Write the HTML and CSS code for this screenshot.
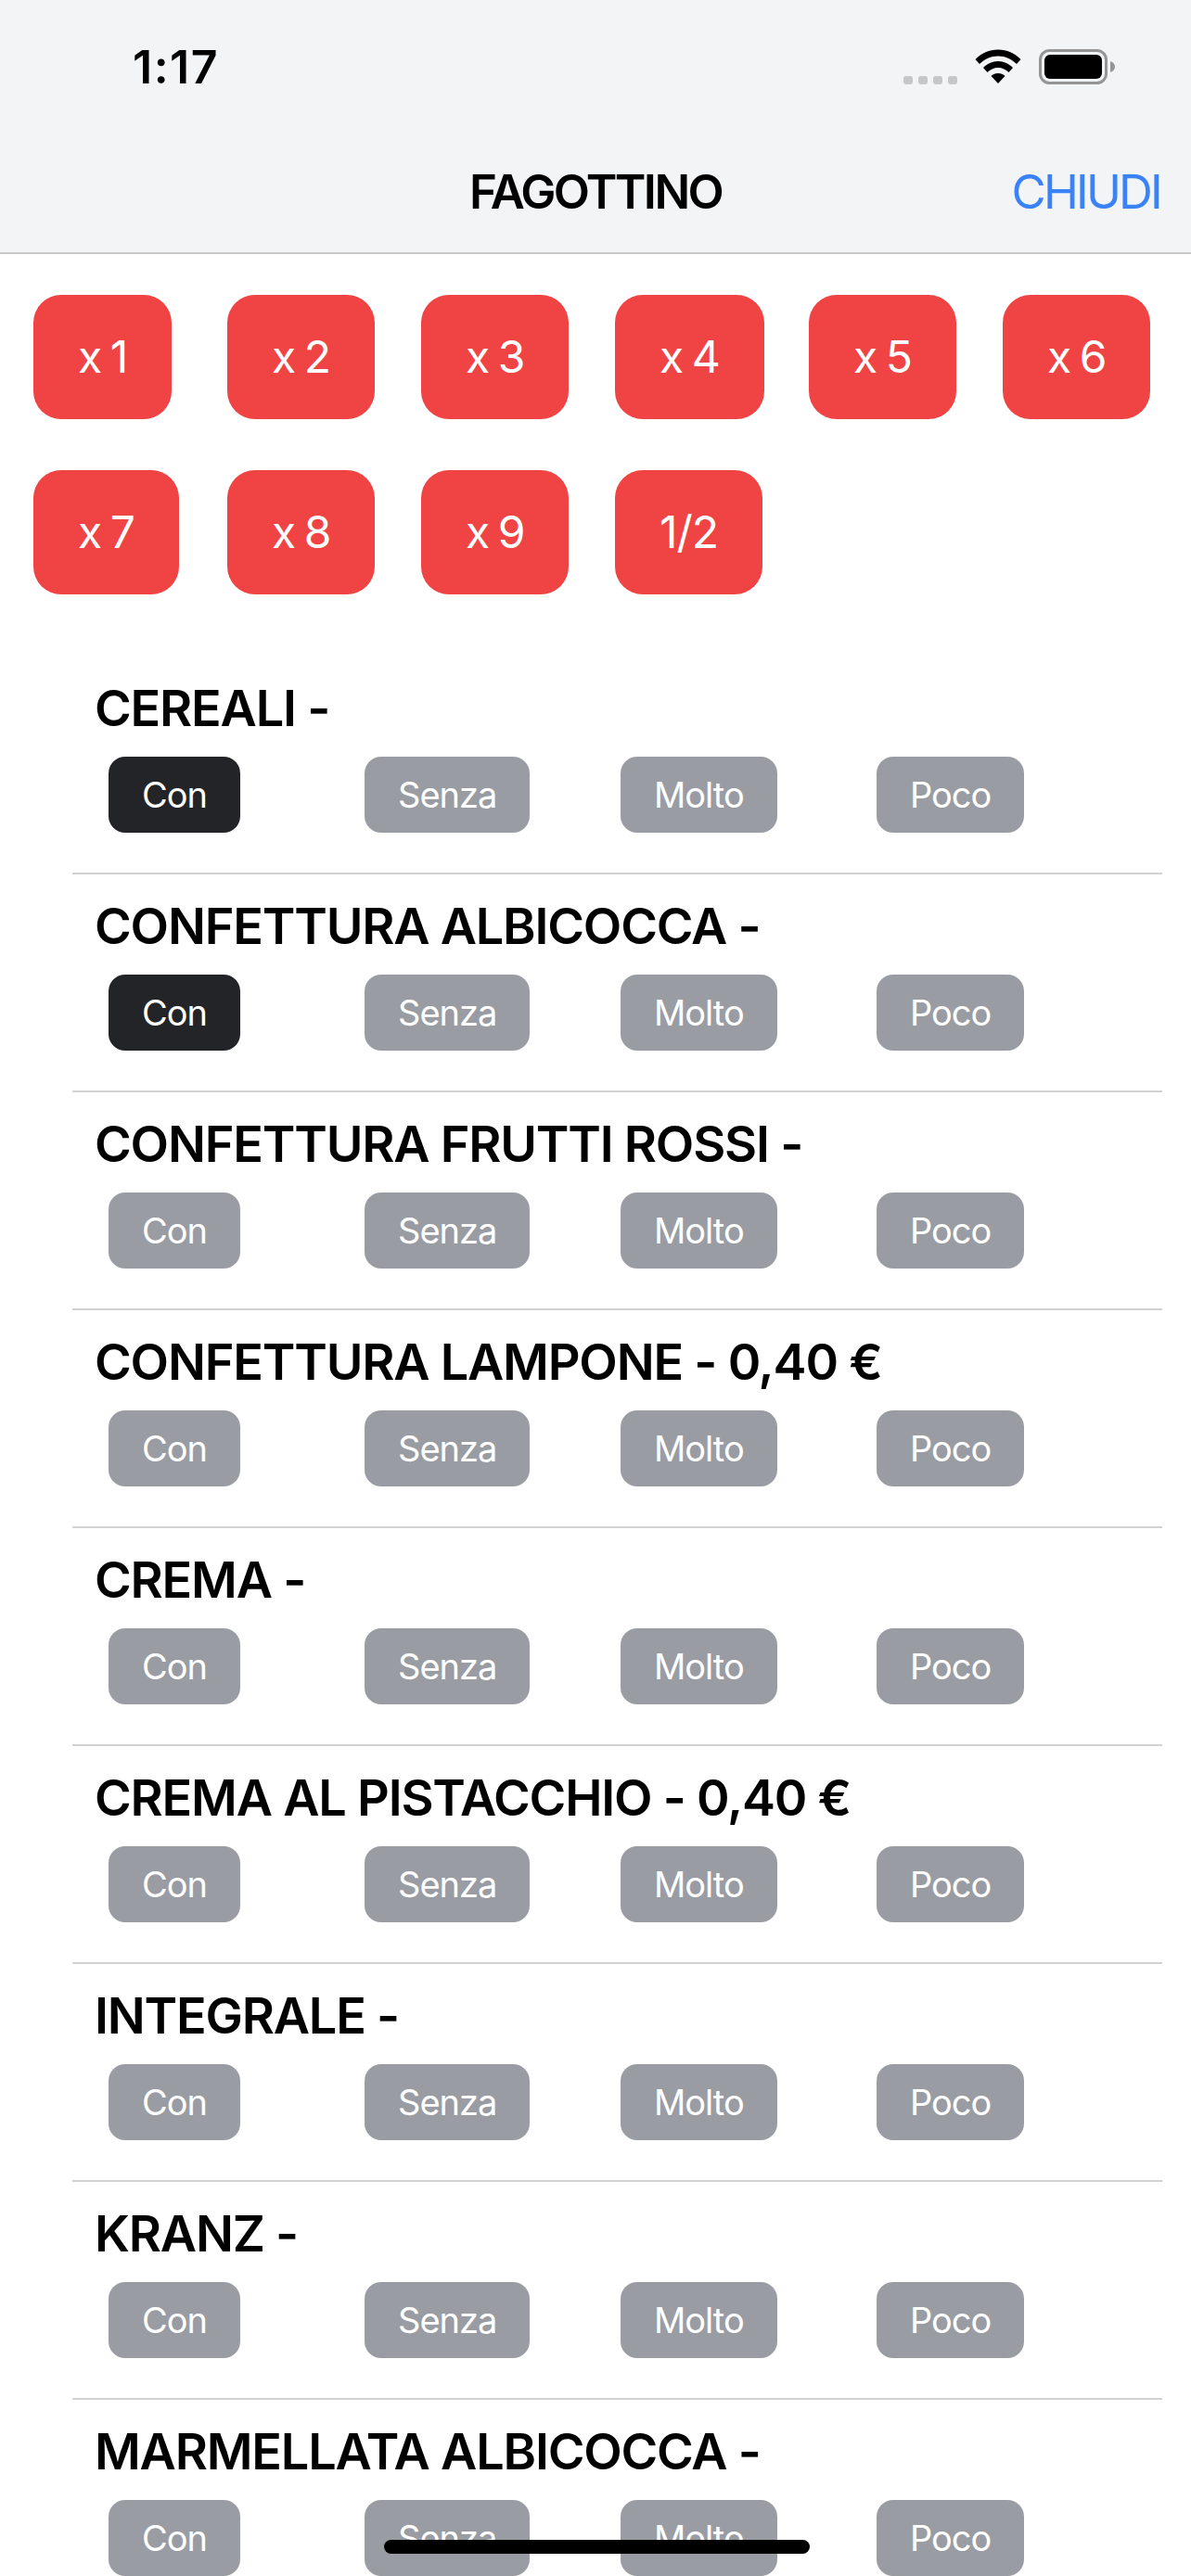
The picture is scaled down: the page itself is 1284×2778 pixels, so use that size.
FILE: index.html
```html
<!DOCTYPE html>
<html lang="en">
<head>
    <meta charset="UTF-8">
    <title>Fagottino</title>
    <link rel="stylesheet" href="styles.css">
</head>
<body>

    <!-- Header -->
    <div class="header">
        <div class="status-bar">
            <span class="clock">1:17</span>
            <div class="status-icons">
                <div class="signal"><span></span><span></span><span></span><span></span></div>
                <svg class="wifi" viewBox="0 0 50 37">
                    <path d="M0.5 11C7 4.5 15.6 0.5 25 0.5C34.4 0.5 43 4.5 49.5 11L45 16C39.7 10.8 32.7 7.5 25 7.5C17.3 7.5 10.3 10.8 5 16Z"/>
                    <path d="M9 20C13 16 18.8 13 25 13C31.2 13 37 16 41 20L36.5 25C33.5 22 29.5 20 25 20C20.5 20 16.5 22 13.5 25Z"/>
                    <path d="M17.5 29C19.5 27 22 26 25 26C28 26 30.5 27 32.5 29L25 37Z"/>
                </svg>
                <svg class="battery" viewBox="0 0 82 38">
                    <rect x="1.5" y="1.5" width="71" height="35" rx="10" fill="none" stroke="#959595" stroke-width="3"/>
                    <rect x="6" y="6" width="62" height="26" rx="6" fill="#000"/>
                    <path d="M77 13C80 14 82 16 82 19C82 22 80 24 77 25Z" fill="#959595"/>
                </svg>
            </div>
        </div>
        <div class="navbar">
            <span class="nav-title">FAGOTTINO</span>
            <a class="nav-close" href="#">CHIUDI</a>
        </div>
    </div>

    <!-- Quantity buttons -->
    <div class="qty-grid">
        <div class="qty-btn">x 1</div>
        <div class="qty-btn">x 2</div>
        <div class="qty-btn">x 3</div>
        <div class="qty-btn">x 4</div>
        <div class="qty-btn">x 5</div>
        <div class="qty-btn">x 6</div>
        <div class="qty-btn">x 7</div>
        <div class="qty-btn">x 8</div>
        <div class="qty-btn">x 9</div>
        <div class="qty-btn">1/2</div>
    </div>

    <!-- Ingredients -->
    <div class="list">
        <div class="row">
            <div class="row-title">CEREALI -</div>
            <div class="options">
                <div class="opt active">Con</div><div class="opt">Senza</div><div class="opt">Molto</div><div class="opt">Poco</div>
            </div>
        </div>
        <div class="row">
            <div class="row-title">CONFETTURA ALBICOCCA -</div>
            <div class="options">
                <div class="opt active">Con</div><div class="opt">Senza</div><div class="opt">Molto</div><div class="opt">Poco</div>
            </div>
        </div>
        <div class="row">
            <div class="row-title">CONFETTURA FRUTTI ROSSI -</div>
            <div class="options">
                <div class="opt">Con</div><div class="opt">Senza</div><div class="opt">Molto</div><div class="opt">Poco</div>
            </div>
        </div>
        <div class="row">
            <div class="row-title">CONFETTURA LAMPONE - 0,40 €</div>
            <div class="options">
                <div class="opt">Con</div><div class="opt">Senza</div><div class="opt">Molto</div><div class="opt">Poco</div>
            </div>
        </div>
        <div class="row">
            <div class="row-title">CREMA -</div>
            <div class="options">
                <div class="opt">Con</div><div class="opt">Senza</div><div class="opt">Molto</div><div class="opt">Poco</div>
            </div>
        </div>
        <div class="row">
            <div class="row-title">CREMA AL PISTACCHIO - 0,40 €</div>
            <div class="options">
                <div class="opt">Con</div><div class="opt">Senza</div><div class="opt">Molto</div><div class="opt">Poco</div>
            </div>
        </div>
        <div class="row">
            <div class="row-title">INTEGRALE -</div>
            <div class="options">
                <div class="opt">Con</div><div class="opt">Senza</div><div class="opt">Molto</div><div class="opt">Poco</div>
            </div>
        </div>
        <div class="row">
            <div class="row-title">KRANZ -</div>
            <div class="options">
                <div class="opt">Con</div><div class="opt">Senza</div><div class="opt">Molto</div><div class="opt">Poco</div>
            </div>
        </div>
        <div class="row">
            <div class="row-title">MARMELLATA ALBICOCCA -</div>
            <div class="options">
                <div class="opt">Con</div><div class="opt">Senza</div><div class="opt">Molto</div><div class="opt">Poco</div>
            </div>
        </div>
    </div>

    <div class="home-indicator"></div>

</body>
</html>
```

FILE: styles.css
```css
html, body {
    margin: 0;
    padding: 0;
    height: 2778px;
    overflow: hidden;
}

body {
    font-family: Inter, "Liberation Sans", sans-serif;
    background-color: #fff;
    color: #000;
}

/* Header */
.header {
    height: 274px;
    box-sizing: border-box;
    background: #f3f4f6;
    border-bottom: 2px solid #c8c8cb;
}

.status-bar {
    display: flex;
    justify-content: space-between;
    align-items: flex-start;
    height: 160px;
    box-sizing: border-box;
    padding: 53px 82px 0 143px;
}

.clock {
    font-size: 50px;
    line-height: 38px;
    font-weight: 600;
    letter-spacing: 1.5px;
}

.status-icons {
    display: flex;
    align-items: flex-start;
}

.signal {
    display: flex;
    gap: 6px;
    margin-top: 29px;
    margin-right: 19px;
}

.signal span {
    width: 10px;
    height: 9px;
    border-radius: 3px;
    background: #c6c6c8;
}

.wifi {
    width: 50px;
    height: 37px;
    margin-right: 19px;
}

.battery {
    width: 82px;
    height: 38px;
}

.navbar {
    display: flex;
    justify-content: center;
    position: relative;
    line-height: 48px;
    margin-top: 23px;
}

.nav-title {
    font-size: 51px;
    font-weight: 600;
    letter-spacing: -2.6px;
}

.nav-close {
    position: absolute;
    right: 33px;
    top: 0;
    font-size: 51px;
    color: #3b82f6;
    text-decoration: none;
    letter-spacing: -2.8px;
}

/* Quantity buttons */
.qty-grid {
    display: grid;
    grid-template-columns: repeat(6, 209px);
    row-gap: 55px;
    justify-items: start;
    padding: 44px 0 0 36px;
}

.qty-btn {
    height: 134px;
    line-height: 134px;
    padding: 0 48px;
    background: #f04343;
    color: #fff;
    font-size: 48px;
    letter-spacing: -1px;
    word-spacing: -3px;
    border-radius: 30px;
}

/* Ingredient list */
.list {
    margin: 67px 31px 0 78px;
}

.row {
    height: 235px;
    box-sizing: border-box;
    padding-top: 24px;
    border-bottom: 2px solid #d2d2d5;
}

.row-title {
    font-size: 54px;
    line-height: 64px;
    font-weight: 600;
    padding-left: 24px;
    letter-spacing: -1.2px;
    white-space: nowrap;
}

.options {
    display: grid;
    grid-template-columns: repeat(4, 276px);
    justify-items: start;
    padding-left: 39px;
    margin-top: 20px;
}

.opt {
    height: 82px;
    line-height: 82px;
    padding: 0 36px;
    background: #9a9ca3;
    color: #fff;
    font-size: 38px;
    border-radius: 18px;
    letter-spacing: -1px;
}

.opt.active {
    background: #232428;
}

.home-indicator {
    position: fixed;
    left: 414px;
    bottom: 24px;
    width: 459px;
    height: 15px;
    border-radius: 8px;
    background: #000;
}
```
